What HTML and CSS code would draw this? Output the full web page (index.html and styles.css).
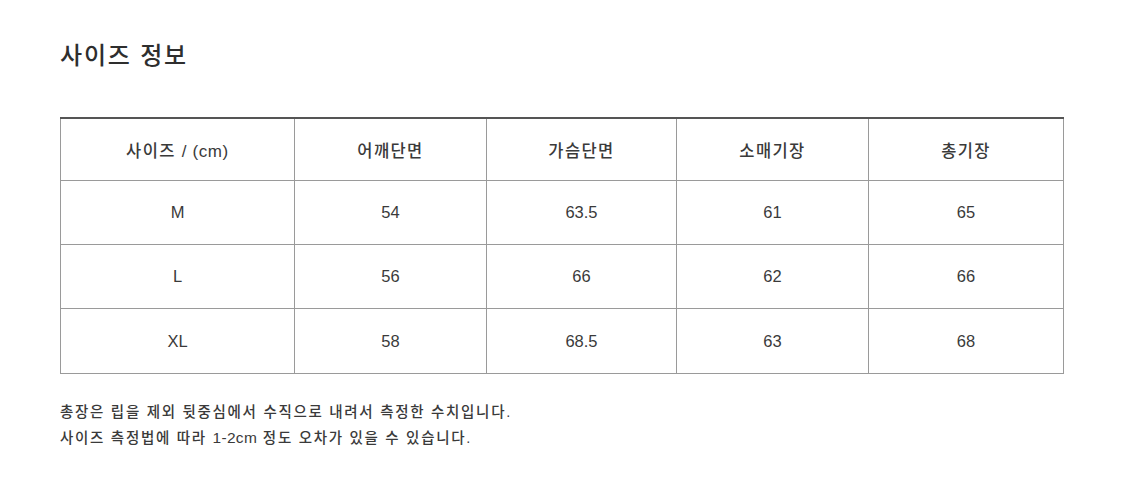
FILE: index.html
```html
<!DOCTYPE html>
<html lang="ko">
<head>
<meta charset="utf-8">
<title>사이즈 정보</title>
<link rel="stylesheet" href="styles.css">
</head>
<body>
<div class="page">
  <h2 class="title">사이즈 정보</h2>
  <table class="size-table">
    <colgroup>
      <col class="c1"><col class="c2"><col class="c3"><col class="c4"><col class="c5">
    </colgroup>
    <thead>
      <tr><th>사이즈 <span class="latin">/ (cm)</span></th><th>어깨단면</th><th>가슴단면</th><th>소매기장</th><th>총기장</th></tr>
    </thead>
    <tbody>
      <tr><td>M</td><td>54</td><td>63.5</td><td>61</td><td>65</td></tr>
      <tr><td>L</td><td>56</td><td>66</td><td>62</td><td>66</td></tr>
      <tr class="last"><td>XL</td><td>58</td><td>68.5</td><td>63</td><td>68</td></tr>
    </tbody>
  </table>
  <div class="notes">
    <p>총장은 립을 제외 뒷중심에서 수직으로 내려서 측정한 수치입니다.</p>
    <p>사이즈 측정법에 따라 <span class="latin">1-2cm</span> 정도 오차가 있을 수 있습니다.</p>
  </div>
</div>
</body>
</html>
```
FILE: styles.css
```css
html, body {
  margin: 0;
  padding: 0;
  background: #ffffff;
}
body {
  font-family: "Liberation Sans", "Noto Sans CJK KR", sans-serif;
  color: #3c3c3c;
}
.page {
  padding: 37px 0 0 60px;
  width: 1003px;
}
.title {
  margin: 0;
  font-family: "Noto Sans CJK KR", sans-serif;
  font-size: 24px;
  line-height: 34px;
  letter-spacing: 1.8px;
  font-weight: 500;
  color: #2e2e2e;
}
.size-table {
  margin-top: 46px;
  width: 1003px;
  border-collapse: collapse;
  table-layout: fixed;
}
.c1 { width: 234px; }
.c2 { width: 192px; }
.c3 { width: 190px; }
.c4 { width: 192px; }
.c5 { width: 195px; }
.size-table th,
.size-table td {
  border: 1px solid #9a9a9a;
  text-align: center;
  padding: 0;
  font-size: 16px;
  color: #3a3a3a;
}
.size-table th {
  border-top: 2px solid #555555;
  height: 61px;
  font-size: 16.5px;
  letter-spacing: 1.4px;
  font-weight: 500;
}
.size-table th .latin {
  letter-spacing: 0.6px;
  font-size: 17px;
}
.size-table td {
  height: 63px;
  font-size: 16.5px;
}
.size-table tr.last td {
  height: 64px;
}
.notes {
  margin-top: 26px;
  font-size: 14.5px;
  line-height: 25px;
  letter-spacing: 1.7px;
  font-weight: 500;
  color: #3a3a3a;
}
.notes .latin {
  letter-spacing: 0.3px;
  font-size: 15.5px;
}
.notes p {
  margin: 0;
}
```
